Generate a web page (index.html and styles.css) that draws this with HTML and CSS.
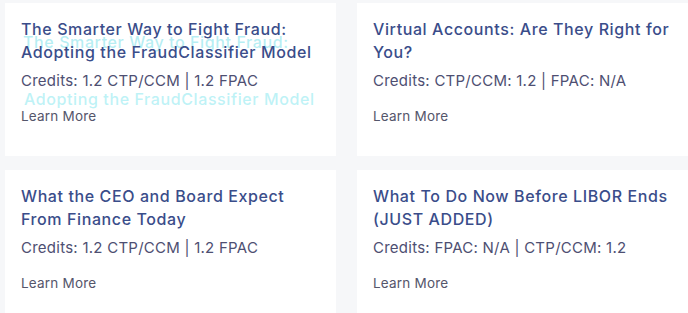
FILE: index.html
```html
<!DOCTYPE html>
<html lang="en">
<head>
<meta charset="utf-8">
<title>Courses</title>
<link rel="stylesheet" href="styles.css">
</head>
<body>
<div class="grid">
  <div class="card">
    <h3 class="title"><span class="ghost-a">The Smarter Way to Fight Fraud:</span> <span class="ghost-b">Adopting the FraudClassifier Model</span></h3>
    <p class="credits">Credits: 1.2 CTP/CCM | 1.2 FPAC</p>
    <a class="more" href="#">Learn More</a>
  </div>
  <div class="card">
    <h3 class="title">Virtual Accounts: Are They Right for You?</h3>
    <p class="credits">Credits: CTP/CCM: 1.2 | FPAC: N/A</p>
    <a class="more" href="#">Learn More</a>
  </div>
  <div class="card">
    <h3 class="title">What the CEO and Board Expect From Finance Today</h3>
    <p class="credits">Credits: 1.2 CTP/CCM | 1.2 FPAC</p>
    <a class="more" href="#">Learn More</a>
  </div>
  <div class="card">
    <h3 class="title">What To Do Now Before LIBOR Ends (JUST ADDED)</h3>
    <p class="credits">Credits: FPAC: N/A | CTP/CCM: 1.2</p>
    <a class="more" href="#">Learn More</a>
  </div>
</div>
</body>
</html>
```
FILE: styles.css
```css
html, body {
  margin: 0;
  padding: 0;
  background: #f6f7f9;
  font-family: "Inter", "Open Sans", sans-serif;
}
.grid {
  display: grid;
  grid-template-columns: 331px 331px;
  column-gap: 21px;
  row-gap: 14px;
  padding: 3px 0 0 5px;
}
.card {
  background: #ffffff;
  display: flex;
  flex-direction: column;
  align-items: flex-start;
  padding: 15px 16px 30px 16px;
  min-height: 153px;
  box-sizing: border-box;
}
.title {
  margin: 0;
  font-size: 16px;
  font-weight: 500;
  line-height: 23px;
  letter-spacing: 0.6px;
  color: #3a4d8a;
}
.ghost-a {
  text-shadow: 2px 13px 0 rgba(110, 222, 232, 0.5);
}
.ghost-b {
  text-shadow: 3px 47px 0 rgba(125, 230, 238, 0.5);
}
.credits {
  margin: 6px 0 0 0;
  font-size: 15px;
  line-height: 22px;
  letter-spacing: 0.25px;
  color: #4e4f72;
}
.more {
  margin-top: 14px;
  font-size: 13.5px;
  line-height: 20px;
  letter-spacing: 0.2px;
  color: #55566b;
  text-decoration: none;
}
```
